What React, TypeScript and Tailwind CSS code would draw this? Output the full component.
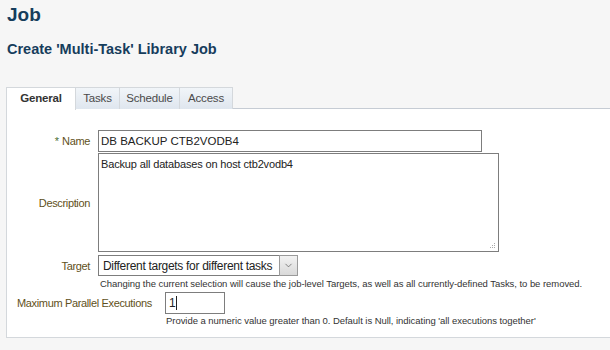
import { ChevronDown } from "lucide-react";

const font = { fontFamily: '"Liberation Sans", Arial, sans-serif' };

function Label({ children }: { children: React.ReactNode }) {
  return <span className="text-[11px] tracking-[-0.35px] text-[#5f5121] whitespace-nowrap">{children}</span>;
}

export default function App() {
  const tabs = [
    { name: "Tasks", w: "w-[44px]" },
    { name: "Schedule", w: "w-[60px]" },
    { name: "Access", w: "w-[53px]" },
  ];
  return (
    <div className="w-[610px] h-[350px] overflow-hidden bg-[#f6f6f6]" style={font}>
      <h1 className="pl-[7px] pt-[3px] text-[19px] font-bold text-[#163d5c] leading-[24px]">Job</h1>
      <h2 className="pl-[7px] mt-[13px] text-[14.5px] font-bold text-[#163d5c] leading-[18px]">
        Create 'Multi-Task' Library Job
      </h2>

      {/* Tab strip */}
      <div className="ml-[6px] mt-[29px] flex border-b border-[#c6ccd4] h-[22px]">
        <div className="-mb-px w-[70px] h-[23px] bg-white border border-b-0 border-[#d4d8dc] flex items-center justify-center text-[11.5px] tracking-[-0.2px] font-bold text-[#333]">
          General
        </div>
        {tabs.map((t) => (
          <div
            key={t.name}
            className={`${t.w} h-[22px] bg-gradient-to-b from-[#f1f5f9] to-[#dfe6ee] border-t border-r border-[#d4d8dc] flex items-center justify-center text-[11.5px] tracking-[-0.2px] text-[#4a4a4a]`}
          >
            {t.name}
          </div>
        ))}
      </div>

      {/* Panel */}
      <div className="ml-[6px] h-[229px] bg-white border-l border-b border-[#d4d8dc] pt-[21px] text-[11px] leading-[14px]">
        <div className="flex items-center">
          <div className="w-[83px] text-right">
            <span className="text-[11px] text-[#4d6f36]">* </span>
            <Label>Name</Label>
          </div>
          <div className="ml-[8px] w-[384px] h-[22px] border border-[#7d7d7d] bg-white px-[2px] flex items-center text-[11.5px] text-[#222]">
            DB BACKUP CTB2VODB4
          </div>
        </div>

        <div className="flex items-center mt-[1px]">
          <div className="w-[83px] text-right">
            <Label>Description</Label>
          </div>
          <div className="relative ml-[8px] w-[401px] h-[99px] border border-[#7d7d7d] bg-white px-[2px] pt-[3px] text-[11px] tracking-[-0.15px] text-[#222]">
            Backup all databases on host ctb2vodb4
            <div className="absolute right-[3px] bottom-[3px] grid grid-cols-3 gap-[1px]">
              <span className="w-[1px] h-[1px]" />
              <span className="w-[1px] h-[1px]" />
              <span className="w-[1px] h-[1px] bg-[#aaa]" />
              <span className="w-[1px] h-[1px]" />
              <span className="w-[1px] h-[1px] bg-[#aaa]" />
              <span className="w-[1px] h-[1px] bg-[#aaa]" />
              <span className="w-[1px] h-[1px] bg-[#aaa]" />
              <span className="w-[1px] h-[1px] bg-[#aaa]" />
              <span className="w-[1px] h-[1px] bg-[#aaa]" />
            </div>
          </div>
        </div>

        <div className="flex items-center mt-[3px]">
          <div className="w-[83px] text-right">
            <Label>Target</Label>
          </div>
          <div className="ml-[8px] w-[200px] h-[21px] border border-[#7d7d7d] border-r-0 bg-white flex items-stretch">
            <span className="flex-1 px-[4px] flex items-center text-[12px] tracking-[-0.3px] text-[#222] whitespace-nowrap">
              Different targets for different tasks
            </span>
            <span className="w-[19px] bg-gradient-to-b from-[#f2f2f2] to-[#d9d9d9] border border-[#9a9a9a] -my-px flex items-center justify-center">
              <ChevronDown size={11} strokeWidth={1.5} className="text-[#555]" />
            </span>
          </div>
        </div>
        <div className="ml-[93px] mt-[1px] text-[9.5px] tracking-[-0.05px] leading-[14px] text-[#333] whitespace-nowrap">
          Changing the current selection will cause the job-level Targets, as well as all currently-defined Tasks, to be removed.
        </div>

        <div className="flex items-center mt-[1px]">
          <div className="pl-[10px] w-[158px]">
            <Label>Maximum Parallel Executions</Label>
          </div>
          <div className="w-[60px] h-[22px] border border-[#7d7d7d] bg-white px-[3px] flex items-center text-[12px] text-[#222]">
            1<span className="w-px h-[14px] bg-[#222]" />
          </div>
        </div>
        <div className="ml-[159px] text-[9.5px] tracking-[-0.05px] leading-[14px] text-[#333] whitespace-nowrap">
          Provide a numeric value greater than 0. Default is Null, indicating 'all executions together'
        </div>
      </div>
    </div>
  );
}
